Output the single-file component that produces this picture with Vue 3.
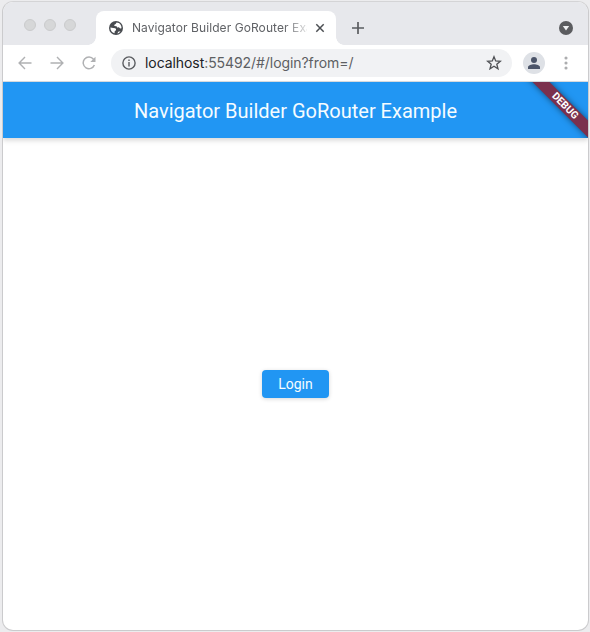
<script setup>
const title = 'Navigator Builder GoRouter Example'
const windowButtons = ['close', 'minimize', 'zoom']
</script>

<template>
  <div class="desktop">
    <div class="window">
      <header class="tab-strip">
        <div class="lights">
          <span v-for="b in windowButtons" :key="b" class="light"></span>
        </div>
        <div class="tab">
          <svg class="globe" width="14" height="14" viewBox="0 0 14 14">
            <circle cx="7" cy="7" r="7" fill="#484b50" />
            <path d="M1.4 6.6 4.2 7.1 6.3 7.3 7.1 8.3 6.9 9.4 5.8 9.9 5.5 12.3C3 11.8 1.2 9.6 1.4 6.6ZM7.6 1.4 6.7 3 5.4 3.7 5.3 5 7.6 5.2 8.2 6.4 9.8 6.3 11.2 7.4 12.5 7.3C12.7 4 10.7 1.6 7.6 1.4ZM8.4 12.5 9.2 10.8 11.5 10.3C10.8 11.5 9.7 12.3 8.4 12.5Z" fill="#fff" />
          </svg>
          <span class="tab-title">{{ title }}</span>
          <svg class="tab-close" width="10" height="10" viewBox="0 0 10 10">
            <path d="M1.3 1.3 8.7 8.7M8.7 1.3 1.3 8.7" stroke="#4c4f53" stroke-width="1.5" />
          </svg>
        </div>
        <svg class="plus" width="14" height="14" viewBox="0 0 14 14">
          <path d="M7 1V13M1 7H13" stroke="#5a5c60" stroke-width="1.7" />
        </svg>
        <svg class="tab-search" width="14" height="14" viewBox="0 0 14 14">
          <circle cx="7" cy="7" r="7" fill="#5b5c5f" />
          <path d="M3.8 5H10.2L7 9.5Z" fill="#f0f1f3" />
        </svg>
      </header>

      <div class="toolbar">
        <svg width="14" height="14" viewBox="0 0 14 14" fill="none" stroke="#b0b1b3" stroke-width="1.4">
          <path d="M13.5 7H1.3M7 1.1 1.1 7 7 12.9" />
        </svg>
        <svg class="forward" width="14" height="14" viewBox="0 0 14 14" fill="none" stroke="#b0b1b3" stroke-width="1.4">
          <path d="M.5 7H12.7M7 1.1 12.9 7 7 12.9" />
        </svg>
        <svg class="reload" width="14" height="14" viewBox="0 0 14 14">
          <path d="M12.4 9A5.8 5.8 0 1 1 11.5 3.2" fill="none" stroke="#b0b1b3" stroke-width="1.5" />
          <path d="M13.5.8V6H8.3Z" fill="#b0b1b3" />
        </svg>
        <div class="omnibox">
          <svg width="14" height="14" viewBox="0 0 14 14">
            <circle cx="7" cy="7" r="6.1" fill="none" stroke="#5a5c60" stroke-width="1.4" />
            <path d="M7 6.1V10.4M7 3.5V5" stroke="#5a5c60" stroke-width="1.4" />
          </svg>
          <span class="url"><span class="host">localhost</span>:55492/#/login?from=/</span>
          <svg class="star" width="16" height="16" viewBox="0 0 16 16">
            <path d="M8 1.7 9.7 6 14.3 6.3 10.8 9.2 12 13.8 8 11.3 4 13.8 5.2 9.2 1.7 6.3 6.3 6Z" fill="none" stroke="#505256" stroke-width="1.3" />
          </svg>
        </div>
        <div class="avatar">
          <svg width="12" height="12" viewBox="0 0 12 12" fill="#4b5469">
            <circle cx="6" cy="3" r="3" />
            <path d="M0 12V10.2C0 8.3 3.5 7.3 6 7.3S12 8.3 12 10.2V12Z" />
          </svg>
        </div>
        <svg class="menu" width="4" height="14" viewBox="0 0 4 14" fill="#acadaf">
          <circle cx="2" cy="2" r="1.55" /><circle cx="2" cy="7" r="1.55" /><circle cx="2" cy="12" r="1.55" />
        </svg>
      </div>

      <div class="app-bar">
        <h1>{{ title }}</h1>
        <div class="banner-clip"><div class="banner">DEBUG</div></div>
      </div>

      <main class="page">
        <button class="login" type="button">Login</button>
      </main>
    </div>
  </div>
</template>

<style>
body {
  margin: 0;
  overflow: hidden;
}
</style>

<style scoped>
.desktop {
  box-sizing: border-box;
  width: 590px;
  height: 632px;
  padding: 1px 1px 1px 2px;
  background: #ececee;
}
.window {
  box-sizing: border-box;
  height: 630px;
  display: flex;
  flex-direction: column;
  overflow: hidden;
  border: 1px solid #cbcbcd;
  border-top-color: #d4d4d6;
  border-radius: 11px;
  background: #fff;
}
svg {
  display: block;
  flex: none;
}
.tab-strip {
  height: 43px;
  flex: none;
  display: flex;
  align-items: flex-end;
  background: #e7e8ec;
}
.lights {
  width: 68px;
  padding: 0 4px 14px 21px;
  display: flex;
  gap: 8px;
}
.light {
  box-sizing: border-box;
  width: 12px;
  height: 12px;
  border: 1px solid #cacbcc;
  border-radius: 50%;
  background: #d6d7d8;
}
.tab {
  position: relative;
  box-sizing: border-box;
  width: 240px;
  height: 34px;
  padding: 0 11px 0 13px;
  display: flex;
  align-items: center;
  border-radius: 8px 8px 0 0;
  background: #fff;
}
.tab::before,
.tab::after {
  content: "";
  position: absolute;
  bottom: 0;
  width: 8px;
  height: 8px;
}
.tab::before {
  left: -8px;
  background: radial-gradient(circle at 0 0, transparent 7.5px, #fff 8px);
}
.tab::after {
  right: -8px;
  background: radial-gradient(circle at 100% 0, transparent 7.5px, #fff 8px);
}
.tab-title {
  width: 175px;
  margin-left: 9px;
  overflow: hidden;
  white-space: nowrap;
  font: 400 12px/18px Inter, sans-serif;
  letter-spacing: 0.08px;
  color: #606266;
  mask-image: linear-gradient(to right, #000 152px, transparent 180px);
}
.tab-close {
  margin-left: 8px;
}
.plus {
  margin: 0 0 10px 15px;
}
.tab-search {
  margin: 0 15px 10px auto;
}
.toolbar {
  height: 36px;
  flex: none;
  display: flex;
  align-items: center;
  padding-left: 15px;
  border-bottom: 1px solid #d9dce0;
  background: #fff;
}
.forward {
  margin-left: 18px;
}
.reload {
  margin-left: 18px;
}
.omnibox {
  box-sizing: border-box;
  width: 401px;
  height: 28px;
  margin-left: 15px;
  padding: 0 10px 0 11px;
  display: flex;
  align-items: center;
  border-radius: 14px;
  background: #f1f2f4;
}
.url {
  margin-left: 9px;
  white-space: nowrap;
  font: 400 14px/20px Inter, sans-serif;
  letter-spacing: -0.07px;
  color: #5d5f63;
}
.host {
  color: #202124;
}
.star {
  margin-left: auto;
}
.avatar {
  width: 22px;
  height: 22px;
  margin-left: 11px;
  display: grid;
  place-items: center;
  border-radius: 50%;
  background: #dee1e6;
}
.menu {
  margin-left: 19px;
}
.app-bar {
  position: relative;
  z-index: 1;
  height: 56px;
  flex: none;
  display: flex;
  align-items: center;
  justify-content: center;
  background: #2196f3;
  box-shadow: 0 2px 4px rgba(0, 0, 0, 0.1), 0 4px 5px rgba(0, 0, 0, 0.05);
}
h1 {
  margin: 0;
  padding-top: 2px;
  font: 400 20px/24px Roboto, sans-serif;
  color: #f5fcff;
}
.banner-clip {
  position: absolute;
  top: 0;
  right: 0;
  width: 72px;
  height: 56px;
  overflow: hidden;
}
.banner {
  position: absolute;
  left: -1px;
  top: 18px;
  width: 100px;
  height: 12px;
  transform: rotate(45deg);
  background: #7b304d;
  box-shadow: 0 0 6px rgba(0, 0, 0, 0.5);
  font: 700 10.2px/12px Roboto, sans-serif;
  text-align: center;
  color: #fff;
}
.page {
  flex: 1;
  display: flex;
  align-items: center;
  justify-content: center;
}
.login {
  width: 67px;
  height: 28px;
  padding: 0;
  border: 0;
  border-radius: 4px;
  background: #2196f3;
  box-shadow: 0 1px 4px rgba(0, 0, 0, 0.16);
  font: 400 14px/28px Roboto, sans-serif;
  color: #f5fcff;
}
</style>
